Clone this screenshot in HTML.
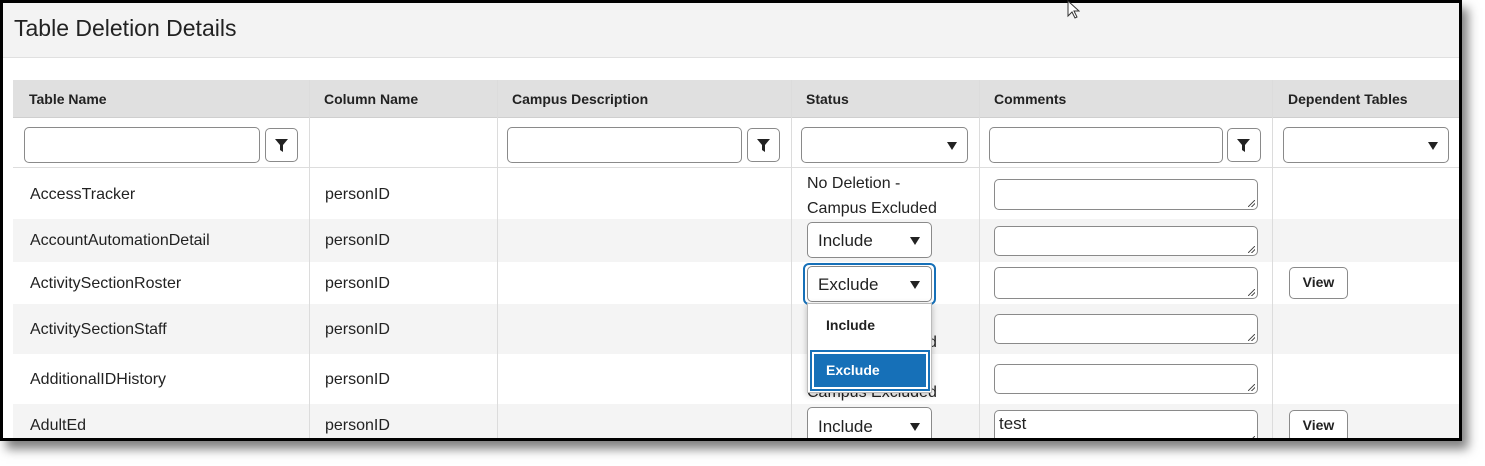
<!DOCTYPE html>
<html><head><style>
*{box-sizing:border-box;margin:0;padding:0}
body{width:1485px;height:466px;background:#fff;position:relative;overflow:hidden;font-family:"Liberation Sans",Arial,sans-serif;color:#222}
.a{position:absolute}
.frame{left:0;top:0;width:1462px;height:441px;border:3px solid #000;box-shadow:6px 8px 10px rgba(0,0,0,.5);background:#fff;overflow:hidden}
.in{position:absolute;border:1px solid #8a8a8a;border-radius:5px;background:#fff}
.btn{position:absolute;border:1px solid #8a8a8a;border-radius:5px;background:#fff}
.tri{position:absolute;width:0;height:0;border-left:5px solid transparent;border-right:5px solid transparent;border-top:8px solid #222}
.t{position:absolute;font-size:16px;white-space:nowrap}
.h{position:absolute;font-size:14px;font-weight:bold;top:91px}
.v{position:absolute;border:1px solid #8a8a8a;border-radius:5px;background:#fff;font-size:14px;font-weight:bold;text-align:center;line-height:29px;width:59px;height:32px}
.ta::after{content:"";position:absolute;right:2px;bottom:2px;width:7px;height:7px;background:linear-gradient(135deg,transparent 45%,#555 45%,#555 55%,transparent 55%,transparent 70%,#555 70%,#555 80%,transparent 80%)}
</style></head><body>
<div class="a frame">
<div class="a" style="left:0;top:0;width:1460px;height:55px;background:#f3f3f3;border-bottom:1px solid #e0e0e0"></div>
<div class="a" style="left:11px;top:12px;font-size:23px;color:#222">Table Deletion Details</div>
<div class="a" style="left:10px;top:77px;width:1450px;height:38px;background:#e0e0e0;border-bottom:1px solid #cfcfcf"></div>
<div class="a" style="left:10px;top:115px;width:1450px;height:50px;background:#fff;border-bottom:1px solid #ddd"></div>
<div class="a" style="left:10px;top:216px;width:1450px;height:43px;background:#f4f4f4"></div>
<div class="a" style="left:10px;top:301px;width:1450px;height:50px;background:#f4f4f4"></div>
<div class="a" style="left:10px;top:401px;width:1450px;height:40px;background:#f4f4f4"></div>
<div class="a" style="left:306px;top:77px;width:1px;height:370px;background:#dcdcdc"></div>
<div class="a" style="left:494px;top:77px;width:1px;height:370px;background:#dcdcdc"></div>
<div class="a" style="left:788px;top:77px;width:1px;height:370px;background:#dcdcdc"></div>
<div class="a" style="left:976px;top:77px;width:1px;height:370px;background:#dcdcdc"></div>
<div class="a" style="left:1269px;top:77px;width:1px;height:370px;background:#dcdcdc"></div>
<div class="h" style="left:26px;top:88px">Table Name</div>
<div class="h" style="left:321px;top:88px">Column Name</div>
<div class="h" style="left:509px;top:88px">Campus Description</div>
<div class="h" style="left:803px;top:88px">Status</div>
<div class="h" style="left:991px;top:88px">Comments</div>
<div class="h" style="left:1285px;top:88px">Dependent Tables</div>
<div class="in" style="left:21px;top:124px;width:236px;height:36px"></div>
<div class="btn" style="left:262px;top:125px;width:33px;height:34px"><svg width="33" height="34" style="position:absolute;left:-1px;top:-1px"><path d="M10 11h13l-5 6v7l-3-2v-5z" fill="#222"/></svg></div>
<div class="in" style="left:504px;top:124px;width:235px;height:36px"></div>
<div class="btn" style="left:744px;top:125px;width:33px;height:34px"><svg width="33" height="34" style="position:absolute;left:-1px;top:-1px"><path d="M10 11h13l-5 6v7l-3-2v-5z" fill="#222"/></svg></div>
<div class="in" style="left:798px;top:124px;width:167px;height:36px"><div class="tri" style="left:145px;top:14px"></div></div>
<div class="in" style="left:986px;top:124px;width:234px;height:36px"></div>
<div class="btn" style="left:1224px;top:125px;width:34px;height:34px"><svg width="34" height="34" style="position:absolute;left:-1px;top:-1px"><path d="M10 11h13l-5 6v7l-3-2v-5z" fill="#222"/></svg></div>
<div class="in" style="left:1280px;top:124px;width:166px;height:36px"><div class="tri" style="left:144px;top:14px"></div></div>
<div class="t" style="left:27px;top:183px">AccessTracker</div>
<div class="t" style="left:27px;top:229px">AccountAutomationDetail</div>
<div class="t" style="left:27px;top:272px">ActivitySectionRoster</div>
<div class="t" style="left:27px;top:318px">ActivitySectionStaff</div>
<div class="t" style="left:27px;top:368px">AdditionalIDHistory</div>
<div class="t" style="left:27px;top:414px">AdultEd</div>
<div class="t" style="left:322px;top:183px">personID</div>
<div class="t" style="left:322px;top:229px">personID</div>
<div class="t" style="left:322px;top:272px">personID</div>
<div class="t" style="left:322px;top:318px">personID</div>
<div class="t" style="left:322px;top:368px">personID</div>
<div class="t" style="left:322px;top:414px">personID</div>
<div class="t" style="left:804px;top:168px;line-height:25px">No Deletion -<br>Campus Excluded</div>
<div class="t" style="left:804px;top:302px;line-height:25px">No Deletion -<br>Campus Excluded</div>
<div class="t" style="left:804px;top:352px;line-height:25px">No Deletion -<br>Campus Excluded</div>
<div class="in" style="left:804px;top:219px;width:125px;height:36px;font-size:17px;padding:8px 10px">Include<div class="tri" style="left:102px;top:14px"></div></div>
<div class="a" style="left:800px;top:260px;width:133px;height:42px;border:2px solid #1670b8;border-radius:6px"></div>
<div class="in" style="left:804px;top:263px;width:125px;height:36px;font-size:17px;padding:8px 10px">Exclude<div class="tri" style="left:102px;top:14px"></div></div>
<div class="in" style="left:804px;top:404px;width:125px;height:40px;font-size:17px;padding:9px 10px">Include<div class="tri" style="left:102px;top:15px"></div></div>
<div class="a" style="left:804px;top:300px;width:125px;height:90px;background:#fff;border:1px solid #bbb;box-shadow:0 2px 6px rgba(0,0,0,.25)"></div>
<div class="a" style="left:823px;top:314px;font-size:14px;font-weight:bold">Include</div>
<div class="a" style="left:807px;top:347px;width:120px;height:41px;background:#1670b8;border:2px solid #1670b8;box-shadow:inset 0 0 0 2px #fff, inset 0 0 0 4px #1670b8"></div>
<div class="a" style="left:823px;top:359px;font-size:14px;font-weight:bold;color:#fff">Exclude</div>
<div class="in ta" style="left:991px;top:176px;width:264px;height:31px"></div>
<div class="in ta" style="left:991px;top:223px;width:264px;height:30px"></div>
<div class="in ta" style="left:991px;top:264px;width:264px;height:32px"></div>
<div class="in ta" style="left:991px;top:311px;width:264px;height:30px"></div>
<div class="in ta" style="left:991px;top:361px;width:264px;height:30px"></div>
<div class="in ta" style="left:991px;top:407px;width:264px;height:36px;font-size:17px;padding:3px 4px">test</div>
<div class="v" style="left:1286px;top:264px">View</div>
<div class="v" style="left:1286px;top:407px">View</div>
</div>
<svg class="a" style="left:1066px;top:0" width="14" height="20"><path d="M2 1v15l4-4 3 6 2-1-3-6h5z" fill="#fff" stroke="#333" stroke-width="1"/></svg>
</body></html>
